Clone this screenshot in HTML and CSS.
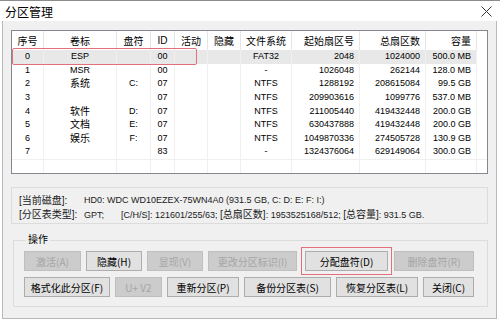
FILE: index.html
```html
<!DOCTYPE html>
<html lang="zh-CN">
<head>
  <meta charset="UTF-8" />
  <title>分区管理</title>
  <link rel="stylesheet" href="styles.css">
</head>
<body>
  <div class="window">
    <div class="titlebar">
      <span class="title">分区管理</span>
      <svg class="close" width="11" height="11" viewBox="0 0 11 11">
        <path d="M0.5 0.5 L10.5 10.5 M10.5 0.5 L0.5 10.5" stroke="#333" stroke-width="1" fill="none" />
      </svg>
    </div>

    <div class="client">
      <div class="list">
        <table>
          <thead>
            <tr>
              <th class="c-no">序号</th>
              <th class="c-label">卷标</th>
              <th class="c-drive">盘符</th>
              <th class="c-id">ID</th>
              <th class="c-act">活动</th>
              <th class="c-hide">隐藏</th>
              <th class="c-fs">文件系统</th>
              <th class="c-start num">起始扇区号</th>
              <th class="c-total num">总扇区数</th>
              <th class="c-size num">容量</th>
              <th class="c-fill"></th>
            </tr>
          </thead>
          <tbody>
            <tr class="selected">
              <td>0</td><td>ESP</td><td></td><td>00</td><td></td><td></td>
              <td>FAT32</td><td class="num">2048</td><td class="num">1024000</td><td class="num">500.0 MB</td><td class="fill"></td>
            </tr>
            <tr>
              <td>1</td><td>MSR</td><td></td><td>00</td><td></td><td></td>
              <td>-</td><td class="num">1026048</td><td class="num">262144</td><td class="num">128.0 MB</td><td class="fill"></td>
            </tr>
            <tr>
              <td>2</td><td class="zh">系统</td><td>C:</td><td>07</td><td></td><td></td>
              <td>NTFS</td><td class="num">1288192</td><td class="num">208615084</td><td class="num">99.5 GB</td><td class="fill"></td>
            </tr>
            <tr>
              <td>3</td><td></td><td></td><td>07</td><td></td><td></td>
              <td>NTFS</td><td class="num">209903616</td><td class="num">1099776</td><td class="num">537.0 MB</td><td class="fill"></td>
            </tr>
            <tr>
              <td>4</td><td class="zh">软件</td><td>D:</td><td>07</td><td></td><td></td>
              <td>NTFS</td><td class="num">211005440</td><td class="num">419432448</td><td class="num">200.0 GB</td><td class="fill"></td>
            </tr>
            <tr>
              <td>5</td><td class="zh">文档</td><td>E:</td><td>07</td><td></td><td></td>
              <td>NTFS</td><td class="num">630437888</td><td class="num">419432448</td><td class="num">200.0 GB</td><td class="fill"></td>
            </tr>
            <tr>
              <td>6</td><td class="zh">娱乐</td><td>F:</td><td>07</td><td></td><td></td>
              <td>NTFS</td><td class="num">1049870336</td><td class="num">274505728</td><td class="num">130.9 GB</td><td class="fill"></td>
            </tr>
            <tr class="last">
              <td>7</td><td></td><td></td><td>83</td><td></td><td></td>
              <td>-</td><td class="num">1324376064</td><td class="num">629149064</td><td class="num">300.0 GB</td><td class="fill"></td>
            </tr>
            <tr class="rest">
              <td></td><td></td><td></td><td></td><td></td><td></td>
              <td></td><td></td><td></td><td></td><td class="fill"></td>
            </tr>
          </tbody>
        </table>
        <div class="mark"></div>
      </div>

      <div class="info">
        <span class="zh">[当前磁盘]:</span>
        <span>HD0: WDC WD10EZEX-75WN4A0 (931.5 GB, C: D: E: F: I:)</span>
        <span class="zh">[分区表类型]:</span>
        <span>GPT;<span class="chs">[C/H/S]: 121601/255/63; <span class="zh">[总扇区数]</span>: 1953525168/512; <span class="zh">[总容量]</span>: 931.5 GB.</span></span>
      </div>

      <fieldset class="ops">
        <legend>操作</legend>
        <div class="btn-row row1">
          <button class="btn" disabled>激活(A)</button>
          <button class="btn">隐藏(H)</button>
          <button class="btn" disabled>显现(V)</button>
          <button class="btn" disabled>更改分区标识(I)</button>
          <button class="btn pick">分配盘符(D)</button>
          <button class="btn" disabled>删除盘符(R)</button>
        </div>
        <div class="btn-row row2">
          <button class="btn">格式化此分区(F)</button>
          <button class="btn" disabled>U+ V2</button>
          <button class="btn">重新分区(P)</button>
          <button class="btn">备份分区表(S)</button>
          <button class="btn">恢复分区表(L)</button>
          <button class="btn">关闭(C)</button>
        </div>
      </fieldset>
    </div>
  </div>
</body>
</html>
```

FILE: styles.css
```css
body {
  margin: 0;
  background: #fff;
  font-family: "Liberation Sans", "Noto Sans CJK SC", sans-serif;
  color: #000;
}

.window {
  width: 500px;
  height: 322px;
  border-top: 1px solid #8c8c8c;
  box-sizing: border-box;
  display: flex;
  flex-direction: column;
}

.titlebar {
  height: 20px;
  flex: none;
  display: flex;
  align-items: center;
  justify-content: space-between;
  padding: 0 8px 0 5px;
}

.title {
  font-size: 12px;
  font-family: "Noto Sans CJK SC", sans-serif;
}

.close {
  display: block;
}

.client {
  flex: 1;
  margin: 0 3px 3px 2px;
  background: #f0f0f0;
  border: 1px solid #b9b9b9;
  border-top: none;
  padding: 9px 8px 0 8px;
}

.list {
  position: relative;
  height: 144px;
  box-sizing: border-box;
  background: #fff;
  border: 1px solid #828790;
  overflow: hidden;
}

table {
  border-collapse: collapse;
  table-layout: fixed;
  width: 475px;
}

th {
  height: 19px;
  padding: 0;
  font-size: 10px;
  font-weight: normal;
  text-align: center;
  border-right: 1px solid #e5e5e5;
}

td {
  height: 13.6px;
  padding: 0;
  font-size: 9px;
  line-height: 13px;
  text-align: center;
  border-right: 1px solid #f0f0f0;
  white-space: nowrap;
}

th.num,
td.num {
  text-align: right;
  padding-right: 5px;
}

.zh {
  font-size: 10px;
}

.c-no { width: 31px; }
.c-label { width: 72px; }
.c-drive { width: 33px; }
.c-id { width: 23px; }
.c-act { width: 32px; }
.c-hide { width: 32px; }
.c-fs { width: 50px; }
.c-start { width: 62px; }
.c-total { width: 60px; }
.c-size { width: 45px; }

th.c-fill,
td.fill {
  border-right: none;
}

.selected td {
  background: #e8e8e8;
}

.selected td.fill {
  background: none;
}

.last td {
  border-bottom: 1px solid #f0f0f0;
}

.mark {
  position: absolute;
  left: 0;
  top: 17px;
  width: 183px;
  height: 15px;
  border: 1px solid #e2707c;
  border-radius: 2px;
}

.info {
  margin-top: 13px;
  height: 37px;
  box-sizing: border-box;
  border: 1px solid #dcdcdc;
  padding: 7px 7px 0 7px;
  display: grid;
  grid-template-columns: 65px auto;
  font-size: 9px;
  line-height: 11px;
  color: #1a1a1a;
  white-space: nowrap;
}

.chs {
  margin-left: 17px;
}

.ops {
  margin: 10px 0 0 2px;
  padding: 5px 13px 9px 10px;
  border: 1px solid #dcdcdc;
}

.ops legend {
  font-size: 10px;
  line-height: 12px;
  padding: 0 2px;
  margin-left: 2px;
}

.btn-row {
  display: grid;
  column-gap: 5px;
}

.row1 {
  grid-template-columns: 57px 56px 56px 89px 87px 80px;
}

.row2 {
  margin-top: 6px;
  grid-template-columns: 86px 47px 72px 87px 82px 51px;
}

.btn {
  height: 20px;
  padding: 0;
  font-family: "Noto Sans CJK SC", sans-serif;
  font-size: 10px;
  color: #000;
  background: #e1e1e1;
  border: 1px solid #adadad;
  border-radius: 0;
}

.btn:disabled {
  color: #a5a5a5;
  background: #cccccc;
  border-color: #bfbfbf;
}

.pick {
  margin: 0 1px 0 3px;
  outline: 1px solid #e2707c;
  outline-offset: 3px;
}
```
